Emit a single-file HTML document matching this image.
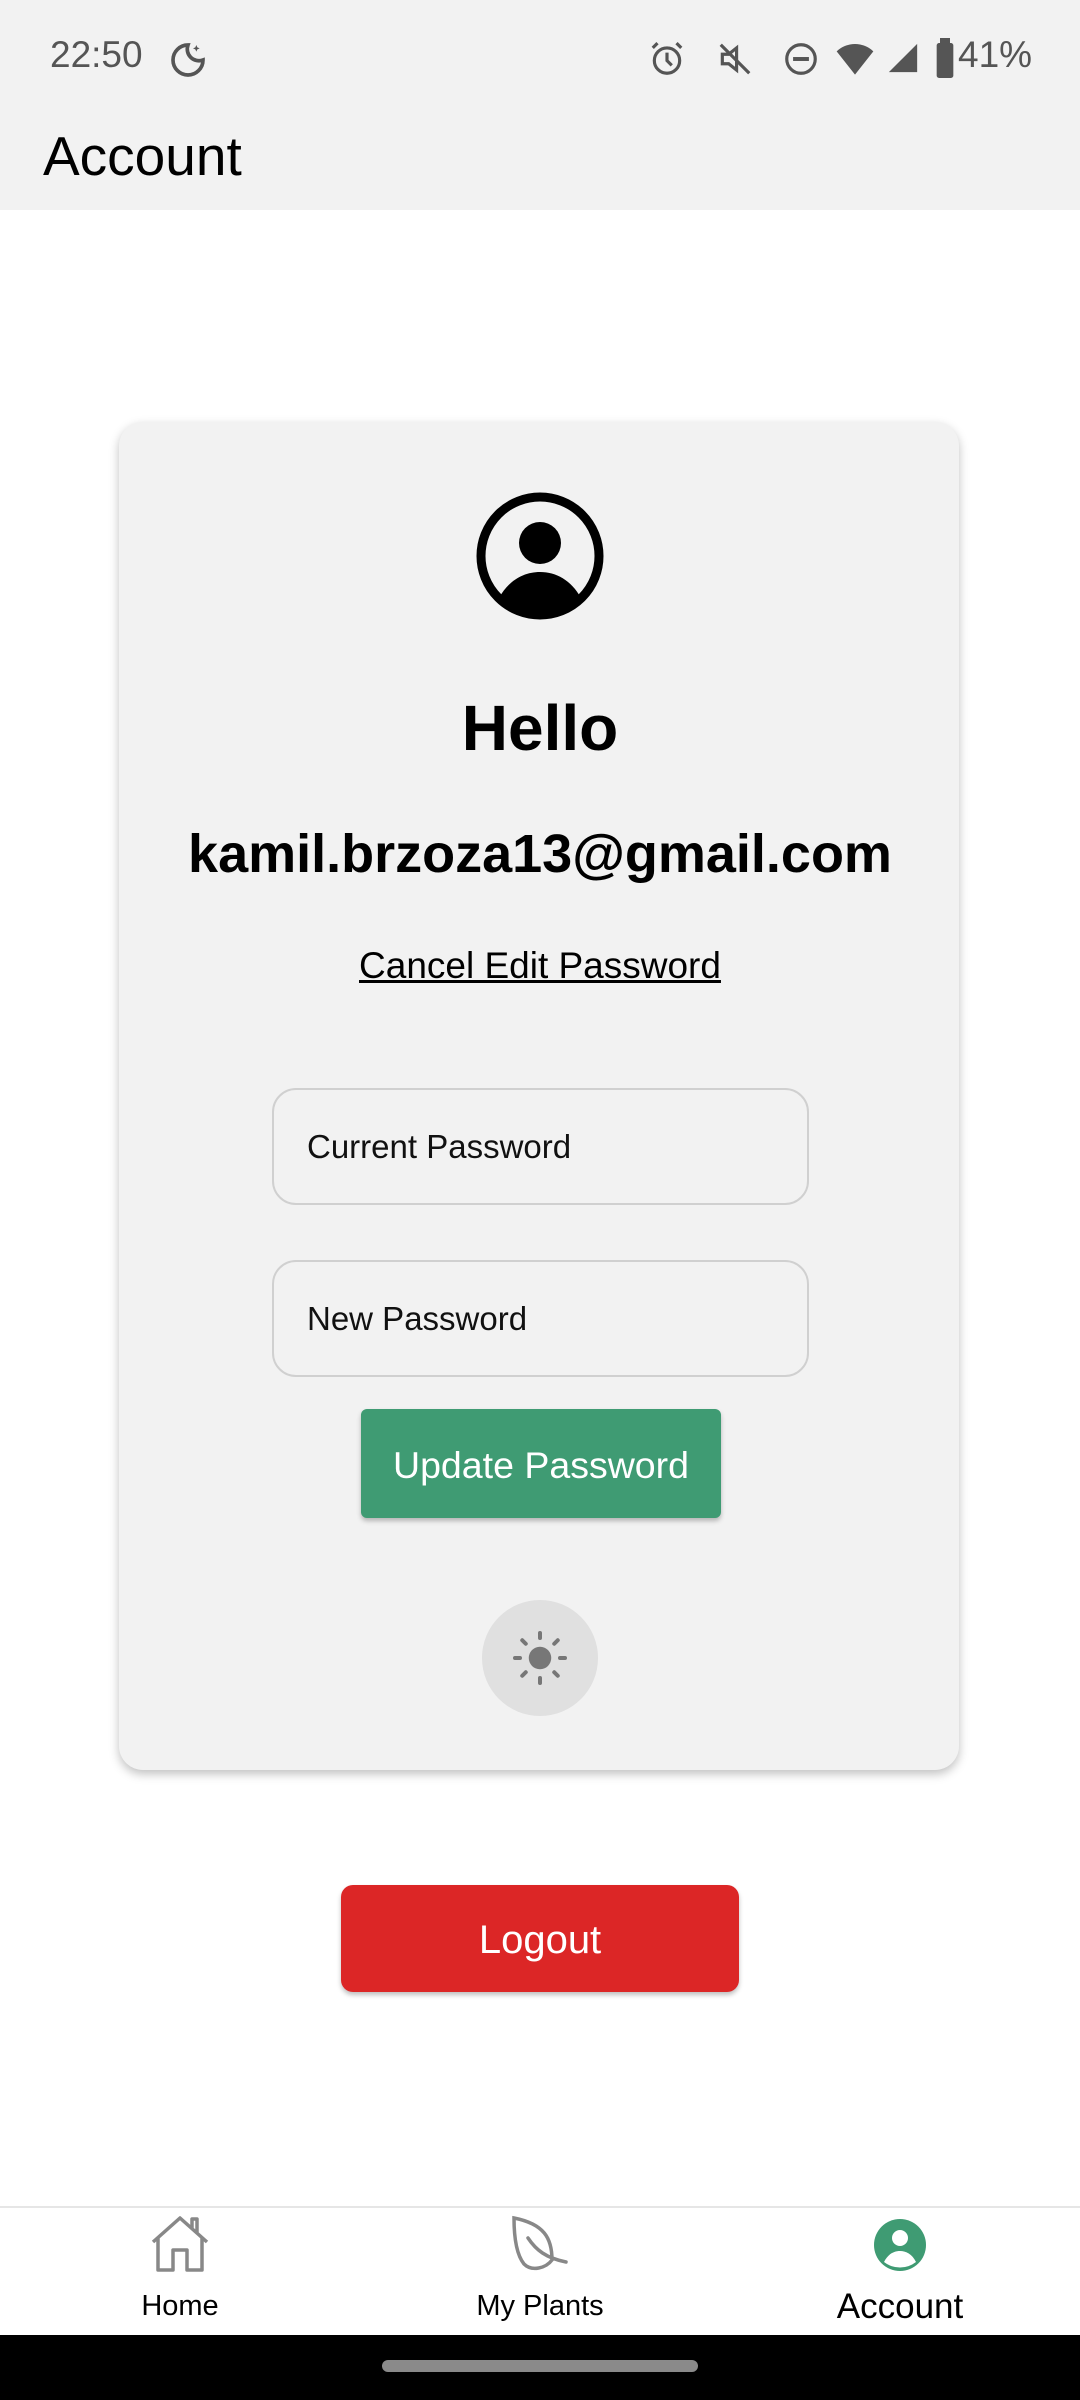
<!DOCTYPE html>
<html><head><meta charset="utf-8"><style>
*{margin:0;padding:0;box-sizing:border-box}
body{width:1080px;height:2400px;background:#fff;font-family:"Liberation Sans",sans-serif;position:relative;overflow:hidden;color:#000}
.abs{position:absolute}
#top{left:0;top:0;width:1080px;height:210px;background:#f2f2f2}
#card{left:119px;top:422px;width:840px;height:1348px;background:#f2f2f2;border-radius:24px;box-shadow:0 4px 10px rgba(0,0,0,.25)}
.c{left:0;width:1080px;text-align:center}
.inp{left:272px;width:537px;height:117px;border:2px solid #d0d0d0;border-radius:24px;font-size:32px;padding-left:33px;line-height:113px;color:#111}
</style></head><body>
<div id="top" class="abs"></div>
<div class="abs" style="left:50px;top:34px;font-size:37px;color:#555">22:50</div>
<svg class="abs" style="left:168px;top:40px" width="40" height="40" viewBox="0 0 24 24"><path d="M12 3a9 9 0 1 0 9 9 7 7 0 0 1-9-9z" fill="none" stroke="#555" stroke-width="2.2"/><path d="M17 3l.6 1.4L19 5l-1.4.6L17 7l-.6-1.4L15 5l1.4-.6z" fill="#555"/></svg>
<svg class="abs" style="left:648px;top:40px" width="38" height="38" viewBox="0 0 24 24"><circle cx="12" cy="13" r="8" fill="none" stroke="#555" stroke-width="2"/><path d="M12 8v5l3 3M3 5l3-3M21 5l-3-3" stroke="#555" stroke-width="2" fill="none"/></svg>
<svg class="abs" style="left:716px;top:40px" width="38" height="38" viewBox="0 0 24 24"><path d="M4 9h4l5-4v14l-5-4H4z" fill="none" stroke="#555" stroke-width="2"/><path d="M3 3l18 18" stroke="#555" stroke-width="2"/></svg>
<svg class="abs" style="left:782px;top:40px" width="38" height="38" viewBox="0 0 24 24"><circle cx="12" cy="12" r="9" fill="none" stroke="#555" stroke-width="2"/><path d="M7 12h10" stroke="#555" stroke-width="2.5"/></svg>
<svg class="abs" style="left:834px;top:38px" width="42" height="40" viewBox="0 0 24 24"><path d="M1 8a16 16 0 0 1 22 0L12 22z" fill="#555"/></svg>
<svg class="abs" style="left:886px;top:40px" width="34" height="36" viewBox="0 0 24 24"><path d="M22 2v20H2z" fill="#555"/></svg>
<svg class="abs" style="left:934px;top:38px" width="22" height="40" viewBox="0 0 12 24"><rect x="3" y="0" width="6" height="3" fill="#555"/><rect x="1" y="3" width="10" height="21" rx="1.5" fill="#555"/></svg>
<div class="abs" style="left:958px;top:34px;font-size:37px;color:#555">41%</div>
<div class="abs" style="left:43px;top:124px;font-size:55px">Account</div>

<div id="card" class="abs"></div>
<svg class="abs" style="left:475px;top:491px" width="130" height="130" viewBox="0 0 130 130"><circle cx="65" cy="65" r="59" fill="none" stroke="#000" stroke-width="9"/><circle cx="65" cy="52" r="21" fill="#000"/><path d="M24 107c10-18 25-26 41-26s31 8 41 26a59 59 0 0 1-82 0z" fill="#000"/></svg>
<div class="abs c" style="top:691px;font-size:64px;font-weight:bold">Hello</div>
<div class="abs c" style="top:823px;font-size:54px;font-weight:bold">kamil.brzoza13@gmail.com</div>
<div class="abs c" style="top:945px;font-size:37px;text-decoration:underline">Cancel Edit Password</div>
<div class="abs inp" style="top:1088px;font-size:33px">Current Password</div>
<div class="abs inp" style="top:1260px;font-size:33px">New Password</div>
<div class="abs" style="left:361px;top:1409px;width:360px;height:109px;background:#3f9b73;border-radius:6px;box-shadow:0 3px 5px rgba(0,0,0,.25);color:#fff;font-size:37.5px;text-align:center;line-height:113px">Update Password</div>
<div class="abs" style="left:482px;top:1600px;width:116px;height:116px;border-radius:50%;background:#e0e0e0"></div>
<svg class="abs" style="left:510px;top:1628px" width="60" height="60" viewBox="0 0 24 24"><circle cx="12" cy="12" r="4.5" fill="#777"/><g stroke="#777" stroke-width="1.6" stroke-linecap="round"><path d="M12 2v2M12 20v2M2 12h2M20 12h2M4.9 4.9l1.4 1.4M17.7 17.7l1.4 1.4M4.9 19.1l1.4-1.4M17.7 6.3l1.4-1.4"/></g></svg>
<div class="abs" style="left:341px;top:1885px;width:398px;height:107px;background:#dc2626;border-radius:12px;box-shadow:0 3px 5px rgba(0,0,0,.25);color:#fff;font-size:40px;text-align:center;line-height:111px">Logout</div>

<div class="abs" style="left:0;top:2206px;width:1080px;height:2px;background:#e6e6e6"></div>
<svg class="abs" style="left:150px;top:2214px" width="60" height="60" viewBox="0 0 60 60"><path d="M3 28L30 4 57 28M8 24v32h15V36h14v20h15V24M42 14V5h5v14" fill="none" stroke="#888" stroke-width="3.5" stroke-linejoin="round"/></svg>
<svg class="abs" style="left:510px;top:2214px" width="64" height="64" viewBox="0 0 64 64"><path d="M4 4c30 6 38 20 38 42-6 8-20 12-28 4C6 40 4 20 4 4z" fill="none" stroke="#888" stroke-width="3.5"/><path d="M18 24c8 12 18 20 38 24" fill="none" stroke="#888" stroke-width="3.5" stroke-linecap="round"/></svg>
<svg class="abs" style="left:874px;top:2219px" width="52" height="52" viewBox="0 0 52 52"><circle cx="26" cy="26" r="26" fill="#3f9b73"/><circle cx="26" cy="19" r="8" fill="#fff"/><path d="M10 43c4-8 10-11 16-11s12 3 16 11a26 26 0 0 1-32 0z" fill="#fff"/></svg>
<div class="abs" style="left:80px;top:2290px;width:200px;text-align:center;font-size:29px">Home</div>
<div class="abs" style="left:440px;top:2290px;width:200px;text-align:center;font-size:29px">My Plants</div>
<div class="abs" style="left:780px;top:2287px;width:240px;text-align:center;font-size:35px">Account</div>
<div class="abs" style="left:0;top:2335px;width:1080px;height:65px;background:#000"></div>
<div class="abs" style="left:382px;top:2360px;width:316px;height:12px;border-radius:6px;background:#8a8a8a"></div>
</body></html>
